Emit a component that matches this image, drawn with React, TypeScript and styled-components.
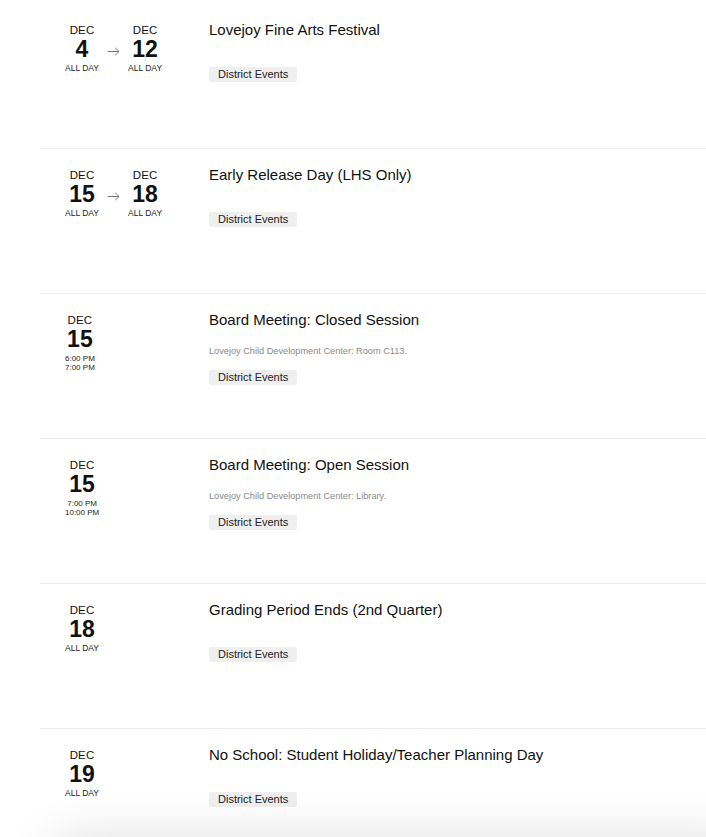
import styled, { createGlobalStyle } from 'styled-components';

const GlobalStyle = createGlobalStyle`
  html, body {
    margin: 0;
    padding: 0;
    background: #ffffff;
    overflow: hidden;
  }
  body {
    font-family: "Liberation Sans", Arial, Helvetica, sans-serif;
    color: #111111;
  }
`;

type EventDate = { day: number; times?: string[] };

type CalendarEvent = {
  title: string;
  start: EventDate;
  end?: EventDate;
  location?: string;
};

const events: CalendarEvent[] = [
  { title: 'Lovejoy Fine Arts Festival', start: { day: 4 }, end: { day: 12 } },
  { title: 'Early Release Day (LHS Only)', start: { day: 15 }, end: { day: 18 } },
  {
    title: 'Board Meeting: Closed Session',
    start: { day: 15, times: ['6:00 PM', '7:00 PM'] },
    location: 'Lovejoy Child Development Center: Room C113.',
  },
  {
    title: 'Board Meeting: Open Session',
    start: { day: 15, times: ['7:00 PM', '10:00 PM'] },
    location: 'Lovejoy Child Development Center: Library.',
  },
  { title: 'Grading Period Ends (2nd Quarter)', start: { day: 18 } },
  { title: 'No School: Student Holiday/Teacher Planning Day', start: { day: 19 } },
];

const List = styled.div`
  padding: 4px 0 0 40px;
`;

const Row = styled.div`
  display: flex;
  height: 144px;
  box-sizing: content-box;
  padding: 0 0 0 25px;
  border-bottom: 1px solid #ebebeb;
`;

const DateColumn = styled.div`
  width: 144px;
  flex-shrink: 0;
  display: flex;
  align-items: flex-start;
  gap: 8px;
  padding-top: 19px;
`;

const DateBlock = styled.div`
  display: flex;
  flex-direction: column;
  align-items: center;
  color: #111111;
`;

const Month = styled.div`
  font-size: 11.5px;
  line-height: 14px;
  letter-spacing: 0.1px;
`;

const Day = styled.div`
  font-size: 23px;
  font-weight: 700;
  line-height: 22px;
  margin-top: 1px;
`;

const Sub = styled.div`
  font-size: 8.5px;
  line-height: 9px;
  margin-top: 4px;
  color: #222222;
`;

const Times = styled.div`
  display: flex;
  flex-direction: column;
  align-items: center;
  margin-top: 4px;
  font-size: 8px;
  line-height: 9px;
  color: #222222;
`;

const Arrow = styled.svg`
  margin-top: 24px;
  flex-shrink: 0;
`;

const Body = styled.div`
  display: flex;
  flex-direction: column;
  align-items: flex-start;
  padding-top: 16px;
`;

const Title = styled.div`
  font-size: 15px;
  line-height: 20px;
  color: #111111;
`;

const Location = styled.div`
  font-size: 9.2px;
  line-height: 12px;
  margin-top: 15px;
  color: #8a8a8a;
`;

const Tag = styled.span<{ $afterLocation: boolean }>`
  display: inline-block;
  margin-top: ${(p) => (p.$afterLocation ? '13px' : '27px')};
  padding: 0 9px;
  height: 15px;
  line-height: 15px;
  font-size: 11px;
  background: #efefef;
  border-radius: 2px;
  color: #222222;
`;

const BottomSheet = styled.div`
  position: fixed;
  left: 52px;
  right: -40px;
  bottom: -70px;
  height: 70px;
  border-radius: 28px;
  background: #ffffff;
  box-shadow: 0 0 50px rgba(0, 0, 0, 0.13);
`;

function DateCell({ date }: { date: EventDate }) {
  return (
    <DateBlock>
      <Month>DEC</Month>
      <Day>{date.day}</Day>
      {date.times ? (
        <Times>
          {date.times.map((t) => (
            <span key={t}>{t}</span>
          ))}
        </Times>
      ) : (
        <Sub>ALL DAY</Sub>
      )}
    </DateBlock>
  );
}

function App() {
  return (
    <>
      <GlobalStyle />
      <List>
        {events.map((ev) => (
          <Row key={ev.title}>
            <DateColumn>
              <DateCell date={ev.start} />
              {ev.end && (
                <>
                  <Arrow width="13" height="9" viewBox="0 0 13 9" fill="none">
                    <path d="M0.5 4.5H12M8.2 0.8L12 4.5L8.2 8.2" stroke="#7a7a7a" strokeWidth="1" />
                  </Arrow>
                  <DateCell date={ev.end} />
                </>
              )}
            </DateColumn>
            <Body>
              <Title>{ev.title}</Title>
              {ev.location && <Location>{ev.location}</Location>}
              <Tag $afterLocation={!!ev.location}>District Events</Tag>
            </Body>
          </Row>
        ))}
      </List>
      <BottomSheet />
    </>
  );
}

export default App;
